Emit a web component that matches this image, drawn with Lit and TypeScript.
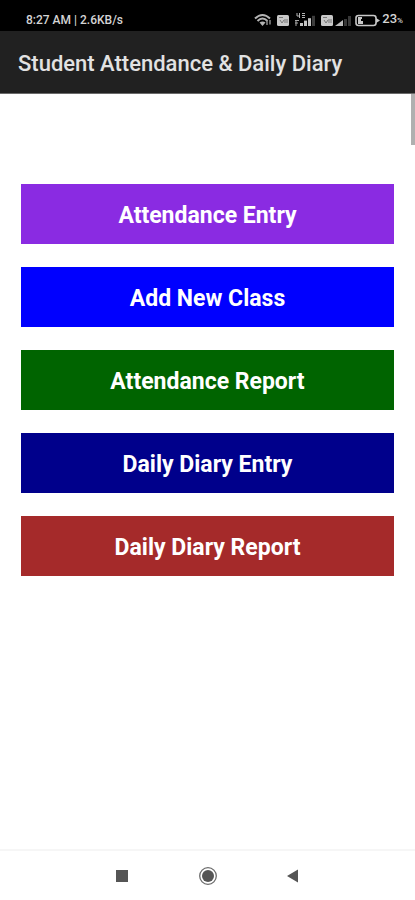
import { LitElement, html, css, svg } from "lit";
import { customElement } from "lit/decorators.js";

@customElement("status-bar")
class StatusBar extends LitElement {
  static styles = css`
    :host {
      display: flex;
      align-items: center;
      justify-content: space-between;
      box-sizing: border-box;
      height: 31px;
      padding: 9px 12px 0 26px;
      background: #000;
      color: #d4d4d4;
      font: 500 12px/22px Roboto, sans-serif;
      white-space: nowrap;
    }
    .icons {
      display: flex;
      align-items: center;
    }
    .percent {
      font-size: 13px;
    }
    .sign {
      font-size: 8px;
    }
    svg {
      display: block;
    }
  `;

  private bars(x: number, lit: number) {
    return [0, 1, 2, 3].map(
      (i) => svg`<rect x=${x + i * 4} y=${11 - i * 2.4} width="3" height=${3 + i * 2.4}
        fill=${i < lit ? "#c4c4c4" : "#3c3c3c"} />`
    );
  }

  render() {
    return html`
      <span>8:27 AM | 2.6KB/s</span>
      <span class="icons">
        <svg width="128" height="16" viewBox="0 0 128 16" role="img" aria-label="Wi-Fi, mobile signal and battery">
          <g fill="none" stroke="#b4b4b4" stroke-width="2">
            <path d="M1 6.500Q8.500 -0.500 16 6.500" />
            <path d="M3.500 9Q8.500 4 13.500 9" />
          </g>
          <path d="M5.500 10.500Q8.500 8.500 11.500 10.500L8.500 14z" fill="#b4b4b4" />
          <path d="M13 13V8.500M16 8v4.500" stroke="#8a8a8a" stroke-width="1.500" />
          <rect x="23" y="3" width="12" height="11" rx="1.500" fill="#c8c8c8" />
          <path d="M25 5.500h4M26 8l2 3 2-3M31 7v4M33 7v4" fill="none" stroke="#777" stroke-width="1" />
          <path d="M43 1v3h3M45.500 1v5M48 1.500h3M48 3.500h3M48 5.500h3" fill="none" stroke="#b4b4b4" />
          <path d="M41 8.500h4M41 11h3M42 8v6" fill="none" stroke="#a8a8a8" />
          ${this.bars(46, 3)}
          <rect x="67" y="3" width="12" height="11" rx="1.500" fill="#c8c8c8" />
          <path d="M69 5.500h4M70 8l2 3 2-3M75 7v4M77 7v4" fill="none" stroke="#777" stroke-width="1" />
          <path d="M81 14l8-6v6z" fill="#bbb" />
          <path d="M90 7h3v7h-3zM94 4h3v10h-3z" fill="#383838" />
          <rect x="102" y="3.500" width="20" height="10" rx="2.500" fill="none" stroke="#c8c8c8" stroke-width="1.600" />
          <path d="M104 5h4v2h-1v2h2v3h-5z" fill="#c8c8c8" />
          <path d="M122 6l4 2.500-4 2.500z" fill="#c8c8c8" />
        </svg>
        <span class="percent">23<span class="sign">%</span></span>
      </span>
    `;
  }
}

@customElement("nav-bar")
class NavBar extends LitElement {
  static styles = css`
    :host {
      display: flex;
      justify-content: center;
      align-items: center;
      gap: 61px;
      box-sizing: border-box;
      height: 51px;
      border-top: 2px solid #f6f6f6;
      background: #fff;
    }
    button {
      display: block;
      padding: 0;
      border: 0;
      background: none;
    }
    svg {
      display: block;
    }
  `;

  render() {
    return html`
      <button aria-label="Recent apps">
        <svg width="24" height="24" viewBox="0 0 24 24">
          <rect x="5" y="6" width="12" height="12" fill="#555" />
        </svg>
      </button>
      <button aria-label="Home">
        <svg width="24" height="24" viewBox="0 0 24 24">
          <circle cx="12" cy="12" r="8.300" fill="none" stroke="#6c6c6c" stroke-width="1.300" />
          <circle cx="12" cy="12" r="6" fill="#555" />
        </svg>
      </button>
      <button aria-label="Back">
        <svg width="24" height="24" viewBox="0 0 24 24">
          <path d="M6 12l11-6.500v13z" fill="#555" />
        </svg>
      </button>
    `;
  }
}

@customElement("app-root")
class AppRoot extends LitElement {
  static styles = css`
    :host {
      display: flex;
      flex-direction: column;
      min-height: 100vh;
      background: #fff;
      font-family: Roboto, sans-serif;
    }
    header {
      box-sizing: border-box;
      height: 63px;
      padding: 0 18px;
      border-bottom: 1px solid #6a6a6a;
      background: #212121;
    }
    h1 {
      margin: 0;
      color: #e2e2e2;
      font-size: 22px;
      font-weight: 500;
      line-height: 66px;
      white-space: nowrap;
    }
    main {
      position: relative;
      flex: 1;
      padding: 90px 21px 22px;
    }
    .thumb {
      position: absolute;
      top: 0;
      right: 0;
      width: 4px;
      height: 51px;
      background: #b0b0b0;
    }
    .menu {
      display: flex;
      flex-direction: column;
      gap: 23px;
    }
    .item {
      height: 60px;
      padding: 3px 0 0;
      border: 0;
      color: #fff;
      font: 700 23px/28px Roboto, sans-serif;
    }
    .violet {
      background: #8a2be2;
    }
    .blue {
      background: #0000ff;
    }
    .green {
      background: #006400;
    }
    .navy {
      background: #00008b;
    }
    .brown {
      background: #a52a2a;
    }
  `;

  private items = [
    { label: "Attendance Entry", tone: "violet" },
    { label: "Add New Class", tone: "blue" },
    { label: "Attendance Report", tone: "green" },
    { label: "Daily Diary Entry", tone: "navy" },
    { label: "Daily Diary Report", tone: "brown" },
  ];

  render() {
    return html`
      <status-bar></status-bar>
      <header><h1>Student Attendance &amp; Daily Diary</h1></header>
      <main>
        <div class="thumb"></div>
        <div class="menu">
          ${this.items.map((i) => html`<button class="item ${i.tone}">${i.label}</button>`)}
        </div>
      </main>
      <nav-bar></nav-bar>
    `;
  }
}
